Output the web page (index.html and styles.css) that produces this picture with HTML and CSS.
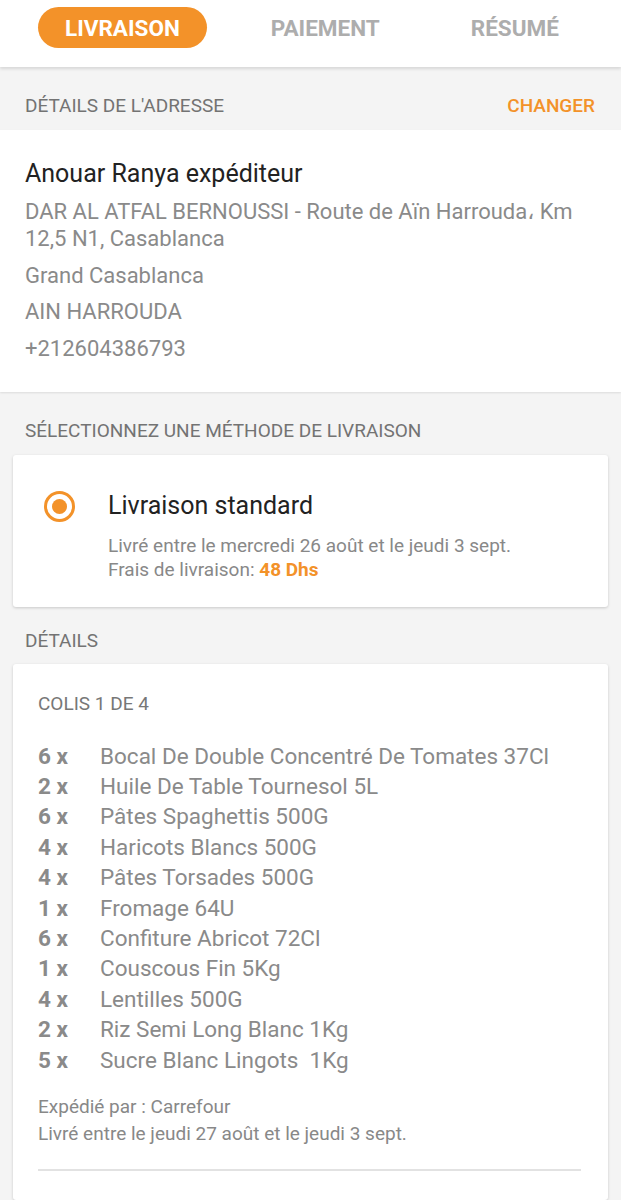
FILE: index.html
```html
<!DOCTYPE html>
<html lang="fr">

<head>
    <meta charset="UTF-8">
    <meta name="viewport" content="width=device-width, initial-scale=1.0">
    <title>Livraison</title>
    <link rel="stylesheet" href="styles.css">
</head>

<body>
    <div class="steps">
        <div class="step active">LIVRAISON</div>
        <div class="step">PAIEMENT</div>
        <div class="step">RÉSUMÉ</div>
    </div>

    <div class="section-head">
        <span>DÉTAILS DE L'ADRESSE</span>
        <a class="change" href="#">CHANGER</a>
    </div>

    <div class="address">
        <p class="name">Anouar Ranya expéditeur</p>
        <p>DAR AL ATFAL BERNOUSSI - Route de Aïn Harrouda، Km 12,5 N1, Casablanca</p>
        <p>Grand Casablanca</p>
        <p>AIN HARROUDA</p>
        <p>+212604386793</p>
    </div>

    <div class="section-head">
        <span>SÉLECTIONNEZ UNE MÉTHODE DE LIVRAISON</span>
    </div>

    <div class="card shipping">
        <span class="radio"><span class="dot"></span></span>
        <div class="shipping-text">
            <p class="method">Livraison standard</p>
            <p class="info">Livré entre le mercredi 26 août et le jeudi 3 sept.</p>
            <p class="info">Frais de livraison: <b class="price">48 Dhs</b></p>
        </div>
    </div>

    <div class="section-head tight">
        <span>DÉTAILS</span>
    </div>

    <div class="card details">
        <p class="parcel">COLIS 1 DE 4</p>
        <ul class="items">
            <li><span class="qty">6 x</span>Bocal De Double Concentré De Tomates 37Cl</li>
            <li><span class="qty">2 x</span>Huile De Table Tournesol 5L</li>
            <li><span class="qty">6 x</span>Pâtes Spaghettis 500G</li>
            <li><span class="qty">4 x</span>Haricots Blancs 500G</li>
            <li><span class="qty">4 x</span>Pâtes Torsades 500G</li>
            <li><span class="qty">1 x</span>Fromage 64U</li>
            <li><span class="qty">6 x</span>Confiture Abricot 72Cl</li>
            <li><span class="qty">1 x</span>Couscous Fin 5Kg</li>
            <li><span class="qty">4 x</span>Lentilles 500G</li>
            <li><span class="qty">2 x</span>Riz Semi Long Blanc 1Kg</li>
            <li><span class="qty">5 x</span>Sucre Blanc Lingots&nbsp; 1Kg</li>
        </ul>
        <p class="shipper">Expédié par : Carrefour<br>Livré entre le jeudi 27 août et le jeudi 3 sept.</p>
        <hr class="divider">
    </div>
</body>

</html>
```

FILE: styles.css
```css
*,
*:before,
*:after {
    box-sizing: border-box;
}

body {
    margin: 0;
    background-color: #f4f4f4;
    font-family: Roboto, "Noto Sans", "DejaVu Sans", sans-serif;
}

p {
    margin: 0;
}

/* step tabs */
.steps {
    display: flex;
    align-items: flex-start;
    gap: 37px;
    height: 67px;
    padding: 7px 38px 0 38px;
    background-color: #fff;
    box-shadow: 0 2px 3px rgba(0, 0, 0, 0.12);
    position: relative;
}

.step {
    height: 41px;
    line-height: 42px;
    padding: 0 27px;
    border-radius: 21px;
    font-size: 22.5px;
    font-weight: bold;
    color: #adadad;
}

.step.active {
    background-color: #f39229;
    color: #fff;
}

/* grey section titles */
.section-head {
    display: flex;
    justify-content: space-between;
    padding: 28px 26px 13px 25px;
    font-size: 19px;
    line-height: 22px;
    color: #737373;
}

.section-head.tight {
    padding-top: 23px;
    padding-bottom: 12px;
}

.change {
    color: #f39229;
    font-weight: 500;
    text-decoration: none;
}

/* address */
.address {
    display: flex;
    flex-direction: column;
    gap: 9.5px;
    padding: 29px 26px 30px 25px;
    background-color: #fff;
    box-shadow: 0 1px 2px rgba(0, 0, 0, 0.1);
    font-size: 22px;
    line-height: 27px;
    color: #8a8a8a;
}

.address .name {
    font-size: 25px;
    line-height: 30px;
    color: #222;
    margin-bottom: -0.5px;
}

/* cards */
.card {
    margin: 0 13px;
    background-color: #fff;
    border-radius: 3px;
    box-shadow: 0 1px 3px rgba(0, 0, 0, 0.18);
}

.shipping {
    display: flex;
    align-items: flex-start;
    gap: 33px;
    padding: 36px 20px 25px 31px;
}

.radio {
    flex: none;
    display: flex;
    align-items: center;
    justify-content: center;
    width: 31px;
    height: 31px;
    border: 3px solid #f39229;
    border-radius: 50%;
}

.radio .dot {
    width: 15px;
    height: 15px;
    border-radius: 50%;
    background-color: #f39229;
}

.method {
    font-size: 25px;
    line-height: 30px;
    color: #222;
    margin-bottom: 13px;
}

.info {
    font-size: 19px;
    line-height: 24px;
    color: #888;
}

.price {
    color: #f39229;
    font-weight: bold;
}

/* parcel details */
.details {
    padding: 29px 27px 29px 25px;
}

.parcel {
    font-size: 19px;
    line-height: 22px;
    color: #777;
}

.items {
    list-style: none;
    margin: 26px 0 18px 0;
    padding: 0;
    font-size: 22.5px;
    line-height: 30.4px;
    color: #8a8a8a;
}

.items li {
    display: flex;
}

.qty {
    width: 62px;
    flex: none;
    font-weight: bold;
}

.shipper {
    font-size: 19px;
    line-height: 27px;
    color: #888;
}

.divider {
    margin: 22px 0 0 0;
    border: none;
    height: 2px;
    background-color: #e2e2e2;
}
```
